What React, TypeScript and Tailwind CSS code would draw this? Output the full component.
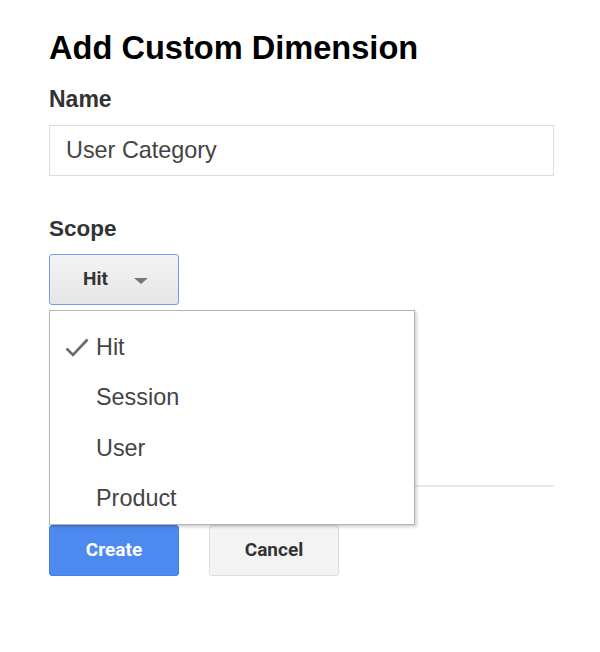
import React from "react";

const scopes = ["Hit", "Session", "User", "Product"];

function Check() {
  return (
    <svg width="24" height="19" viewBox="0 0 24 19" className="shrink-0">
      <path d="M1.5 10.5 L8 17 L22.5 1.5" fill="none" stroke="#6b6b6b" strokeWidth="2.6" />
    </svg>
  );
}

export default function App() {
  return (
    <div className="w-[600px] h-[652px] bg-white pl-[49px] pt-[28px] font-['Liberation_Sans',Arial,sans-serif]">
      <div className="w-[505px]">
        <h1 className="text-[32.6px] leading-[40px] font-bold text-black">Add Custom Dimension</h1>

        {/* Name */}
        <div className="mt-[18px] text-[23px] leading-[26px] font-bold text-[#333]">Name</div>
        <div className="mt-[13px] h-[51px] border border-[#dcdcdc] flex items-center pl-[16px] text-[23.4px] text-[#444]">
          User Category
        </div>

        {/* Scope */}
        <div className="mt-[40px] text-[22.5px] leading-[26px] font-bold text-[#333]">Scope</div>
        <div className="relative mt-[12px]">
          <button className="w-[130px] h-[51px] rounded-[3px] border border-[#6f9ff0] bg-gradient-to-b from-[#f3f3f3] to-[#e6e6e6] flex items-center pl-[33px] text-[19px] font-bold text-[#333] font-['Roboto',sans-serif]">
            <span>Hit</span>
            <svg width="14" height="6" viewBox="0 0 14 6" className="ml-[26px] mt-[2px]">
              <path d="M0 0 H14 L7 6 Z" fill="#777" />
            </svg>
          </button>

          <div className="absolute left-0 top-[56px] w-[366px] h-[215px] bg-white border border-[#b4b4b4] shadow-[2px_2px_3px_rgba(0,0,0,0.18)] pt-[11px] z-10">
            {scopes.map((s, i) => (
              <div key={s} className="h-[50.5px] flex items-center text-[23.4px] text-[#444]">
                <div className="w-[46px] pl-[15px] flex items-center">{i === 0 && <Check />}</div>
                <span>{s}</span>
              </div>
            ))}
          </div>
        </div>

        <div className="mt-[180px] h-[2px] bg-[#e8e8e8]" />

        <div className="mt-[38px] flex gap-[30px] font-['Roboto',sans-serif]">
          <button className="w-[130px] h-[51px] rounded-[3px] bg-[#4d8af0] border border-[#437fe3] text-white text-[19px] font-bold">
            Create
          </button>
          <button className="w-[130px] h-[51px] rounded-[3px] bg-[#f3f3f3] border border-[#dedede] text-[#333] text-[19px] font-bold">
            Cancel
          </button>
        </div>
      </div>
    </div>
  );
}
